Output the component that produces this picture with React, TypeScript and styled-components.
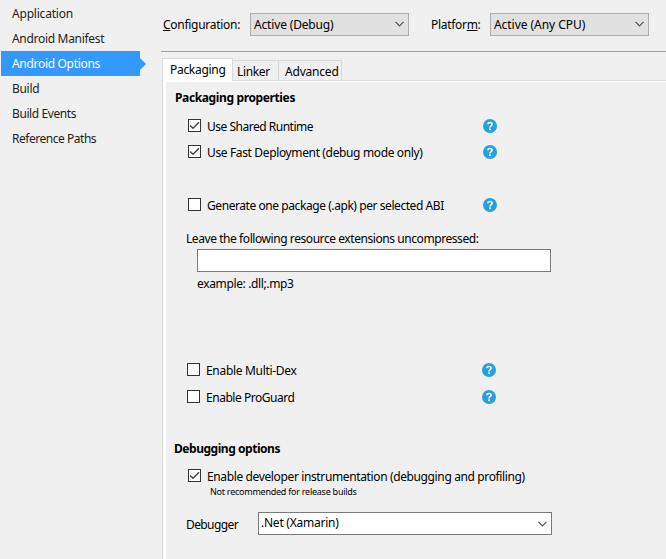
import React from 'react';
import styled, { createGlobalStyle } from 'styled-components';

const GlobalStyle = createGlobalStyle`
  * { box-sizing: border-box; }
  body {
    margin: 0;
    background: #f0f0f0;
    color: #000;
    font: 12px/14px "Noto Sans", "Open Sans", sans-serif;
    overflow: hidden;
  }
`;

const Page = styled.div`
  display: flex;
  width: 666px;
  height: 559px;
  background: #f0f0f0;
`;

const Text = styled.span<{ $track?: number }>`
  white-space: nowrap;
  letter-spacing: ${(p) => p.$track ?? 0}px;
`;

const Sidebar = styled.nav`
  display: flex;
  flex-direction: column;
  flex: none;
  width: 161px;
  padding: 1px 0 0 1px;
`;

const NavRow = styled.div`
  display: flex;
  align-items: center;
  height: 25px;
`;

const NavItem = styled.a<{ $active?: boolean }>`
  display: flex;
  align-items: center;
  width: 139px;
  height: 25px;
  padding: 1px 0 0 11px;
  color: ${(p) => (p.$active ? '#fff' : '#1e1e1e')};
  background: ${(p) => (p.$active ? '#3399ff' : 'transparent')};
`;

const Arrow = styled.svg`
  display: block;
  width: 6px;
  height: 12px;
`;

const Main = styled.main`
  display: flex;
  flex-direction: column;
  flex: 1;
  min-width: 0;
`;

const Toolbar = styled.header`
  display: flex;
  align-items: center;
  height: 52px;
  padding: 0 0 3px 2px;
  border-bottom: 1px solid #a0a0a0;
`;

const ToolbarLabel = styled.label<{ $width: number; $track: number }>`
  flex: none;
  width: ${(p) => p.$width}px;
  padding-top: 2px;
  white-space: nowrap;
  letter-spacing: ${(p) => p.$track}px;
`;

const AccessKey = styled.span`
  text-decoration: underline;
  text-decoration-thickness: 1px;
  text-underline-offset: 1px;
  text-decoration-skip-ink: none;
`;

const SelectBox = styled.div<{ $width: number; $light?: boolean }>`
  display: flex;
  align-items: center;
  justify-content: space-between;
  flex: none;
  width: ${(p) => p.$width}px;
  height: 23px;
  padding: 0 4px 0 ${(p) => (p.$light ? 2 : 3)}px;
  background: ${(p) => (p.$light ? '#fff' : '#e1e1e1')};
  border: 1px solid ${(p) => (p.$light ? '#7a7a7a' : '#adadad')};
`;

const ToolbarSelect = styled(SelectBox)`
  margin-right: 22px;
`;

const SelectText = styled(Text)`
  padding-top: 2px;
`;

const DebuggerValue = styled(Text)`
  padding-bottom: 1px;
`;

const ChevronIcon = styled.svg`
  display: block;
  width: 9px;
  height: 6px;
`;

const Tabs = styled.div`
  display: flex;
  align-items: flex-end;
  flex: none;
  height: 29px;
  padding-left: 1px;
  box-shadow: inset 0 -1px #d9d9d9;
`;

const Tab = styled.div<{ $width: number; $active?: boolean }>`
  display: flex;
  align-items: center;
  width: ${(p) => p.$width}px;
  height: ${(p) => (p.$active ? 23 : 21)}px;
  padding: ${(p) => (p.$active ? '0 0 1px 7px' : '2px 0 0 4px')};
  background: ${(p) => (p.$active ? '#fff' : '#f0f0f0')};
  border: 1px solid #d9d9d9;
  border-width: ${(p) => (p.$active ? '1px 1px 0' : '1px 1px 1px 0')};
`;

const WideTab = styled(Tab)`
  padding-left: 6px;
`;

const Panel = styled.section`
  display: flex;
  flex-direction: column;
  flex: 1;
  margin-left: 1px;
  border-left: 1px solid #d9d9d9;
  box-shadow: inset 3px 1px #fff;
  padding: 10px 0 0 13px;
`;

const Heading = styled.h2<{ $track: number }>`
  margin: 0 0 0 -1px;
  font-size: 12px;
  line-height: 14px;
  font-weight: 700;
  white-space: nowrap;
  letter-spacing: ${(p) => p.$track}px;
`;

const DebugHeading = styled(Heading)`
  margin: 38px 0 0 -2px;
`;

const OptionRow = styled.div<{ $top: number; $indent: number }>`
  display: flex;
  flex: none;
  width: ${(p) => 321 + p.$indent}px;
  height: 14px;
  margin-top: ${(p) => p.$top}px;
  padding-left: ${(p) => 12 + p.$indent}px;
  line-height: 15px;
`;

const OptionLabel = styled.label<{ $track: number }>`
  flex: 1;
  margin-left: 6px;
  white-space: nowrap;
  letter-spacing: ${(p) => p.$track}px;
`;

const BoxIcon = styled.svg`
  display: block;
  flex: none;
  width: 13px;
  height: 13px;
`;

const HelpBadge = styled.svg`
  display: block;
  flex: none;
  width: 14px;
  height: 14px;
`;

const ExtensionGroup = styled.div`
  display: flex;
  flex-direction: column;
  margin-top: 20px;
  padding-left: 10px;
`;

const ExtensionInput = styled.input`
  width: 354px;
  height: 23px;
  margin: 3px 0 5px 11px;
  padding: 0 4px;
  background: #fff;
  border: 1px solid #7a7a7a;
  border-radius: 0;
  outline: none;
  font: inherit;
`;

const Example = styled(Text)`
  margin-left: 11px;
`;

const Note = styled.div`
  margin: 2px 0 0 34px;
  font-size: 9px;
  line-height: 13px;
  white-space: nowrap;
  letter-spacing: -0.25px;
`;

const DebuggerRow = styled.div`
  display: flex;
  align-items: center;
  margin-top: 14px;
  padding-left: 10px;
`;

const DebuggerLabel = styled.label`
  width: 72px;
  padding-top: 2px;
  letter-spacing: -0.6px;
`;

const Chevron = () => (
  <ChevronIcon viewBox="0 0 9 6">
    <path d="M0.5 0.8 L4.5 4.8 L8.5 0.8" fill="none" stroke="#505050" strokeWidth="1.2" />
  </ChevronIcon>
);

const Checkbox = ({ checked }: { checked?: boolean }) => (
  <BoxIcon viewBox="0 0 13 13">
    <rect x="0.5" y="0.5" width="12" height="12" fill="#fff" stroke="#333" />
    {checked && <path d="M2.2 6.4 L5 9.2 L11 3.2" fill="none" stroke="#444" strokeWidth="1.4" />}
  </BoxIcon>
);

const Help = () => (
  <HelpBadge viewBox="0 0 14 14">
    <circle cx="7" cy="7" r="7" fill="#26a0e0" />
    <path
      d="M4.9 5.2 C4.9 3 9.1 2.9 9.1 5.2 C9.1 6.7 7 6.6 7 8.4"
      fill="none"
      stroke="#fff"
      strokeWidth="1.6"
    />
    <rect x="6.1" y="9.4" width="1.8" height="1.7" fill="#fff" />
  </HelpBadge>
);

type OptionProps = {
  label: string;
  track: number;
  top: number;
  indent?: number;
  checked?: boolean;
  help?: boolean;
};

const Option = ({ label, track, top, indent = 0, checked, help }: OptionProps) => (
  <OptionRow $top={top} $indent={indent}>
    <Checkbox checked={checked} />
    <OptionLabel $track={track}>{label}</OptionLabel>
    {help && <Help />}
  </OptionRow>
);

const navItems = [
  { label: 'Application', track: -0.2 },
  { label: 'Android Manifest', track: -0.31 },
  { label: 'Android Options', track: -0.31, active: true },
  { label: 'Build', track: -0.3 },
  { label: 'Build Events', track: -0.41 },
  { label: 'Reference Paths', track: -0.47 },
];

export default function App() {
  return (
    <Page>
      <GlobalStyle />
      <Sidebar>
        {navItems.map((item) => (
          <NavRow key={item.label}>
            <NavItem $active={item.active}>
              <Text $track={item.track}>{item.label}</Text>
            </NavItem>
            {item.active && (
              <Arrow viewBox="0 0 6 12">
                <path d="M0 0 L6 6 L0 12 Z" fill="#3399ff" />
              </Arrow>
            )}
          </NavRow>
        ))}
      </Sidebar>
      <Main>
        <Toolbar>
          <ToolbarLabel $width={87} $track={-0.28}>
            <AccessKey>C</AccessKey>onfiguration:
          </ToolbarLabel>
          <ToolbarSelect $width={159}>
            <SelectText $track={-0.16}>Active (Debug)</SelectText>
            <Chevron />
          </ToolbarSelect>
          <ToolbarLabel $width={59} $track={-0.3}>
            Platfor<AccessKey>m</AccessKey>:
          </ToolbarLabel>
          <SelectBox $width={159}>
            <SelectText $track={-0.05}>Active (Any CPU)</SelectText>
            <Chevron />
          </SelectBox>
        </Toolbar>
        <Tabs>
          <Tab $width={71} $active>
            <Text $track={-0.3}>Packaging</Text>
          </Tab>
          <Tab $width={46}>
            <Text $track={-0.36}>Linker</Text>
          </Tab>
          <WideTab $width={63}>
            <Text $track={-0.2}>Advanced</Text>
          </WideTab>
        </Tabs>
        <Panel>
          <Heading $track={-0.37}>Packaging properties</Heading>
          <Option label="Use Shared Runtime" track={-0.49} top={14} checked help />
          <Option label="Use Fast Deployment (debug mode only)" track={-0.36} top={12} checked help />
          <Option label="Generate one package (.apk) per selected ABI" track={-0.43} top={39} help />
          <ExtensionGroup>
            <Text $track={-0.43}>Leave the following resource extensions uncompressed:</Text>
            <ExtensionInput />
            <Example $track={-0.36}>example: .dll;.mp3</Example>
          </ExtensionGroup>
          <Option label="Enable Multi-Dex" track={-0.31} top={72} indent={-1} help />
          <Option label="Enable ProGuard" track={-0.46} top={13} indent={-1} help />
          <DebugHeading $track={-0.46}>Debugging options</DebugHeading>
          <Option
            label="Enable developer instrumentation (debugging and profiling)"
            track={-0.372}
            top={13}
            checked
          />
          <Note>Not recommended for release builds</Note>
          <DebuggerRow>
            <DebuggerLabel>Debugger</DebuggerLabel>
            <SelectBox $width={294} $light>
              <DebuggerValue $track={-0.24}>.Net (Xamarin)</DebuggerValue>
              <Chevron />
            </SelectBox>
          </DebuggerRow>
        </Panel>
      </Main>
    </Page>
  );
}
